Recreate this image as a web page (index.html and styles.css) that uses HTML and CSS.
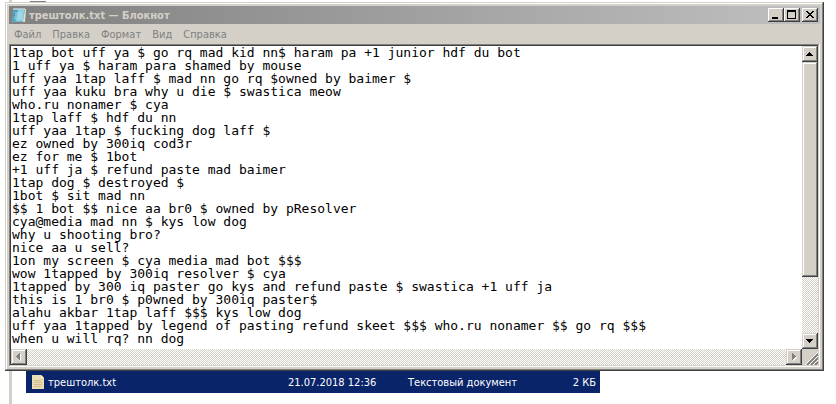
FILE: index.html
```html
<!DOCTYPE html>
<html lang="ru">
<head>
    <meta charset="UTF-8">
    <meta name="viewport" content="width=device-width, initial-scale=1.0">
    <title>трештолк.txt — Блокнот</title>
    <link rel="stylesheet" href="styles.css">
</head>
<body>
    <div class="explorer">
        <div class="head"></div>
        <div class="window">
            <div class="title">
                <svg class="icon" width="16" height="16" viewBox="0 0 16 16">
                    <path d="M3 2h12l-1 13H1z" fill="#6fb3c8"/>
                    <path d="M3 3h10l-1 11H1z" fill="#8fd3e6"/>
                    <path d="M3 3h4L5 14H1z" fill="#4b9dbb"/>
                    <path d="M14 2h1l-1 13h-2z" fill="#e8dcc0"/>
                    <path d="M4 6h8M4 8h8M3 10h9M3 12h9" stroke="#a4dcea"/>
                    <path d="M3 1v2M5 1v2M7 1v2M9 1v2M11 1v2M13 1v2" stroke="#dff3f7"/>
                </svg>
                <span class="name">трештолк.txt — Блокнот</span>
                <button class="btn" aria-label="Свернуть">
                    <svg width="16" height="14" shape-rendering="crispEdges"><path d="M4 9h6v2H4z"/></svg>
                </button>
                <button class="btn" aria-label="Развернуть">
                    <svg width="16" height="14" shape-rendering="crispEdges"><path d="M3 2h9v9H3zM4 4v6h7V4z" fill-rule="evenodd"/></svg>
                </button>
                <button class="btn close" aria-label="Закрыть">
                    <svg width="16" height="14" shape-rendering="crispEdges"><path d="M4 3h2v1h1v1h2V4h1V3h2v1h-1v1h-1v1H9v1h1v1h1v1h1v1h-2V9H9V8H7v1H6v1H4V9h1V8h1V7h1V6H6V5H5V4H4z"/></svg>
                </button>
            </div>
            <div class="menu">
                <button>Файл</button>
                <button>Правка</button>
                <button>Формат</button>
                <button>Вид</button>
                <button>Справка</button>
            </div>
            <div class="edit">
                <textarea class="text" rows="23" wrap="off" spellcheck="false" aria-label="Текст">1tap bot uff ya $ go rq mad kid nn$ haram pa +1 junior hdf du bot
1 uff ya $ haram para shamed by mouse
uff yaa 1tap laff $ mad nn go rq $owned by baimer $
uff yaa kuku bra why u die $ swastica meow
who.ru nonamer $ cya
1tap laff $ hdf du nn
uff yaa 1tap $ fucking dog laff $
ez owned by 300iq cod3r
ez for me $ 1bot
+1 uff ja $ refund paste mad baimer
1tap dog $ destroyed $
1bot $ sit mad nn
$$ 1 bot $$ nice aa br0 $ owned by pResolver
cya@media mad nn $ kys low dog
why u shooting bro?
nice aa u sell?
1on my screen $ cya media mad bot $$$
wow 1tapped by 300iq resolver $ cya
1tapped by 300 iq paster go kys and refund paste $ swastica +1 uff ja
this is 1 br0 $ p0wned by 300iq paster$
alahu akbar 1tap laff $$$ kys low dog
uff yaa 1tapped by legend of pasting refund skeet $$$ who.ru nonamer $$ go rq $$$
when u will rq? nn dog</textarea>
                <div class="vscroll">
                    <button class="arrow" aria-label="Вверх">
                        <svg width="16" height="16" shape-rendering="crispEdges"><path d="M7 6h1v1h1v1h1v1h1v1H4V9h1V8h1V7h1z"/></svg>
                    </button>
                    <div class="thumb"></div>
                    <button class="arrow" aria-label="Вниз">
                        <svg width="16" height="16" shape-rendering="crispEdges"><path d="M4 6h7v1h-1v1H9v1H8v1H7V9H6V8H5V7H4z"/></svg>
                    </button>
                </div>
                <div class="hscroll">
                    <button class="arrow" aria-label="Влево" disabled>
                        <svg width="16" height="16" shape-rendering="crispEdges"><path d="M9 5h1v7H9z" fill="#fff"/><path d="M9 4v7H8v-1H7V9H6V8H5V7h1V6h1V5h1V4z" fill="#808080"/></svg>
                    </button>
                    <button class="arrow" aria-label="Вправо" disabled>
                        <svg width="16" height="16" shape-rendering="crispEdges"><path d="M7 5v7h1v-1h1v-1h1V9h1V8h-1z" fill="#fff"/><path d="M6 4h1v1h1v1h1v1h1v1H9v1H8v1H7v1H6z" fill="#808080"/></svg>
                    </button>
                </div>
                <svg class="grip" width="16" height="16">
                    <path d="M5 16L16 5M9 16L16 9M13 16l3-3" stroke="#808080" stroke-width="2"/>
                    <path d="M3 16L16 3M7 16l9-9M11 16l5-5" stroke="#fff"/>
                </svg>
            </div>
        </div>
        <div class="file">
            <span class="file-name">
                <svg width="12" height="14" viewBox="0 0 12 14">
                    <path d="M0 0h9l3 3v11H0z" fill="#ecdcb4"/>
                    <path d="M9 0v3h3z" fill="#fff6dc"/>
                    <path d="M2 5.5h7M2 7.5h8M2 9.5h8M2 11.5h7" stroke="#d2be8e"/>
                </svg>
                трештолк.txt
            </span>
            <span>21.07.2018 12:36</span>
            <span>Текстовый документ</span>
            <span class="size">2 КБ</span>
        </div>
    </div>
</body>
</html>
```
FILE: styles.css
```css
*{
    box-sizing: border-box;
}
body{
    margin: 0;
    background: #fff;
    font-family: "DejaVu Sans Condensed", "Noto Sans", sans-serif;
    font-size: 11px;
}
button{
    padding: 0;
    border: 0;
    background: #d4d0c8;
    font: inherit;
}
svg{
    display: block;
    flex: none;
}
.explorer{
    min-height: 100vh;
    margin-left: 9px;
    padding-right: 12px;
    border-left: 3px solid #d4d0c8;
}
.head{
    width: 16px;
    height: 2px;
    margin-left: 18px;
    border-bottom: 1px solid #808080;
}
/* окно */
.window{
    margin-left: -7px;
    padding: 4px;
    background: #d4d0c8;
    box-shadow: inset -1px -1px #404040, inset 1px 1px #d4d0c8, inset -2px -2px #808080, inset 2px 2px #fff;
}
.title{
    display: flex;
    align-items: center;
    height: 18px;
    padding: 0 2px;
    background: linear-gradient(to right, #808080, #c0c0c0);
    color: #d4d0c8;
    font-weight: bold;
}
.name{
    flex: 1;
    margin-left: 2px;
}
.btn{
    width: 16px;
    height: 14px;
    box-shadow: inset -1px -1px #404040, inset 1px 1px #fff, inset -2px -2px #808080;
}
.close{
    margin-left: 2px;
}
.menu{
    display: flex;
    gap: 11px;
    height: 20px;
    padding: 0 5px;
}
.menu button{
    color: #808080;
}
/* поле с текстом и полосы прокрутки */
.edit{
    display: grid;
    grid-template-columns: 1fr 16px;
    padding: 2px;
    background: #fff;
    box-shadow: inset -1px -1px #fff, inset 1px 1px #808080, inset -2px -2px #d4d0c8, inset 2px 2px #404040;
}
.text{
    display: block;
    width: 100%;
    margin: 0;
    padding: 0 1px 4px;
    border: 0;
    outline: 0;
    overflow: hidden;
    resize: none;
    background: #fff;
    color: #000;
    font: 13px/13px "DejaVu Sans Mono", monospace;
}
.vscroll,.hscroll{
    display: flex;
    justify-content: space-between;
    background: repeating-conic-gradient(#d4d0c8 0 25%, #fff 0 50%) 0 0/2px 2px;
}
.vscroll{
    flex-direction: column;
}
.arrow,.thumb{
    background: #d4d0c8;
    box-shadow: inset -1px -1px #404040, inset 1px 1px #d4d0c8, inset -2px -2px #808080, inset 2px 2px #fff;
}
.arrow{
    width: 16px;
    height: 16px;
}
.thumb{
    height: 71%;
    margin-bottom: auto;
}
.grip{
    background: #d4d0c8;
}
/* строка файла */
.file{
    display: grid;
    grid-template-columns: 256px 120px 1fr auto;
    align-items: center;
    max-width: 574px;
    height: 22px;
    margin-left: 14px;
    padding: 0 4px 0 6px;
    background: #0a246a;
    color: #fff;
}
.file-name{
    display: flex;
    align-items: center;
    gap: 4px;
}
```
